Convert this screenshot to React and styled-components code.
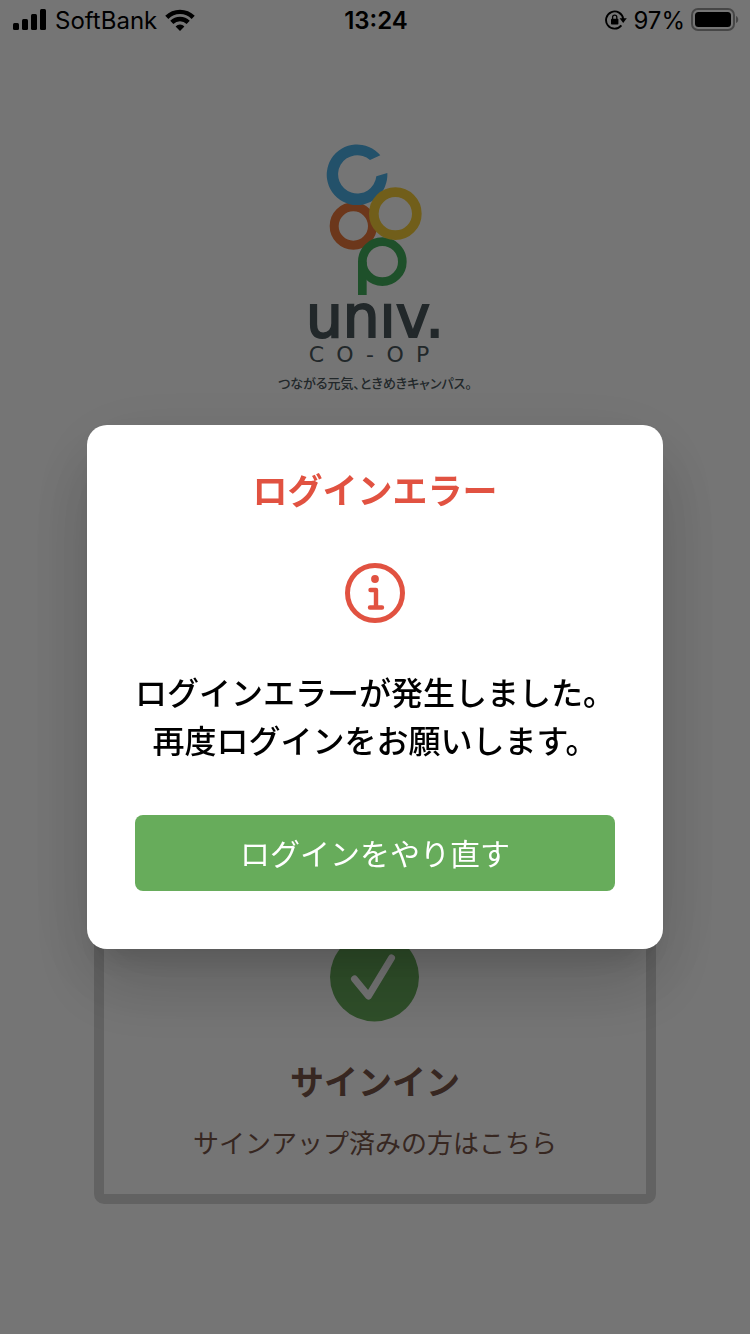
import React from "react";
import styled, { createGlobalStyle } from "styled-components";

const GlobalStyle = createGlobalStyle`
  *, *::before, *::after {
    box-sizing: border-box;
  }
  body {
    margin: 0;
    background: #fff;
    color: #000;
    font-family: Inter, "Noto Sans CJK JP", sans-serif;
  }
`;

function SignalIcon() {
  return (
    <svg width="34" height="22" viewBox="0 0 34 22" aria-hidden="true">
      <rect x="0" y="14" width="6" height="7" rx="1.5" />
      <rect x="9" y="10" width="6" height="11" rx="1.5" />
      <rect x="18" y="5" width="6" height="16" rx="1.5" />
      <rect x="27" y="0" width="6" height="21" rx="1.5" />
    </svg>
  );
}

function WifiIcon() {
  return (
    <svg width="30" height="22" viewBox="0 0 30 22" aria-hidden="true">
      <g fill="none" stroke="#000" strokeWidth="4.4">
        <path d="M1.8 8.4a18.6 18.6 0 0 1 26.4 0" />
        <path d="M6.8 13.4a11.6 11.6 0 0 1 16.4 0" />
      </g>
      <path d="M15 22l-4.4-4.6a6.3 6.3 0 0 1 8.8 0z" />
    </svg>
  );
}

function RotationLockIcon() {
  return (
    <svg width="22" height="20" viewBox="0 0 22 20" aria-hidden="true">
      <path
        d="M16.4 15.4A8.6 8.6 0 1 1 18.2 9"
        fill="none"
        stroke="#000"
        strokeWidth="1.9"
      />
      <path d="M14.6 8.2h7.2l-3.6 4.8z" />
      <rect x="6" y="8.8" width="7.4" height="5.8" rx="0.8" />
      <path
        d="M7.6 9V7.2a2.1 2.1 0 0 1 4.2 0V9"
        fill="none"
        stroke="#000"
        strokeWidth="1.3"
      />
    </svg>
  );
}

function BatteryIcon() {
  return (
    <svg width="48" height="24" viewBox="0 0 48 24" aria-hidden="true">
      <rect
        x="1"
        y="1"
        width="42"
        height="21"
        rx="6"
        fill="none"
        stroke="#000"
        strokeOpacity="0.4"
        strokeWidth="2"
      />
      <rect x="4" y="4" width="36" height="15" rx="3.5" />
      <path d="M45 8c3 1 3 6 0 7z" fillOpacity="0.4" />
    </svg>
  );
}

function CoopMark() {
  return (
    <svg width="98" height="152" viewBox="198 39 294 456" aria-hidden="true">
      <g fill="none">
        <circle cx="280" cy="288" r="57.5" stroke="#eb783b" strokeWidth="27" />
        <circle cx="367" cy="395" r="60" stroke="#43ae5d" strokeWidth="26" />
        <path d="M307 395v100" stroke="#43ae5d" strokeWidth="26" />
      </g>
      <path
        d="M361 76A91 91 0 1 0 382 129L349 139A57.5 57.5 0 1 1 330 90Z"
        fill="#4eb0e6"
      />
      <circle
        cx="406"
        cy="251"
        r="64.5"
        fill="none"
        stroke="#f6ce39"
        strokeWidth="29"
      />
    </svg>
  );
}

function CheckIcon() {
  return (
    <svg width="90" height="90" viewBox="0 0 90 90" aria-hidden="true">
      <circle cx="44.5" cy="45" r="44.5" fill="#67ac5b" />
      <path
        d="M24.5 47L38.5 64L61.5 26"
        fill="none"
        stroke="#fff"
        strokeWidth="7"
        strokeLinecap="round"
        strokeLinejoin="round"
      />
    </svg>
  );
}

function InfoIcon() {
  return (
    <svg width="60" height="60" viewBox="0 0 60 60" aria-hidden="true">
      <g
        fill="none"
        stroke="#e15241"
        strokeLinecap="round"
        strokeLinejoin="round"
      >
        <circle cx="30" cy="30" r="27.5" strokeWidth="5" />
        <path d="M25.5 27H31V44M25 44.5H37" strokeWidth="4.4" />
      </g>
      <circle cx="30" cy="16" r="3.9" fill="#e15241" />
    </svg>
  );
}

export default function App() {
  return (
    <>
      <GlobalStyle />
      <Page>
        <StatusBar>
          <StatusGroup>
            <SignalIcon />
            <StatusText>SoftBank</StatusText>
            <WifiIcon />
          </StatusGroup>
          <Clock>13:24</Clock>
          <StatusGroup $end>
            <RotationLockIcon />
            <StatusText>97%</StatusText>
            <BatteryIcon />
          </StatusGroup>
        </StatusBar>
        <Brand>
          <CoopMark />
          <Wordmark>unıv.</Wordmark>
          <SubMark>CO-OP</SubMark>
          <Tagline>つながる元気、ときめきキャンパス。</Tagline>
        </Brand>
        <SignInCard href="#signin">
          <CheckIcon />
          <CardTitle>サインイン</CardTitle>
          <CardText>サインアップ済みの方はこちら</CardText>
        </SignInCard>
      </Page>
      <Overlay>
        <Dialog role="alertdialog" aria-labelledby="title" aria-describedby="message">
          <DialogTitle id="title">ログインエラー</DialogTitle>
          <InfoIcon />
          <Message id="message">
            ログインエラーが発生しました。
            <br />
            再度ログインをお願いします。
          </Message>
          <RetryButton type="button">ログインをやり直す</RetryButton>
        </Dialog>
      </Overlay>
    </>
  );
}

const Page = styled.div`
  display: flex;
  flex-direction: column;
  align-items: center;
  min-height: 100vh;
  padding-bottom: 130px;
`;

const StatusBar = styled.header`
  display: grid;
  grid-template-columns: 1fr auto 1fr;
  align-items: center;
  width: 100%;
  height: 40px;
  padding: 0 11px 0 13px;
  font-size: 24px;
  line-height: 28px;
`;

const StatusGroup = styled.div`
  display: flex;
  align-items: center;
  justify-content: ${({ $end }) => ($end ? "flex-end" : "flex-start")};
  gap: ${({ $end }) => ($end ? "6px" : "8px")};
`;

const StatusText = styled.span`
  padding-top: 2px;
`;

const Clock = styled.time`
  padding-top: 2px;
  font-size: 24px;
  font-weight: 600;
`;

const Brand = styled.div`
  display: flex;
  flex-direction: column;
  align-items: center;
  padding-top: 103px;
  color: #4a575d;
`;

const Wordmark = styled.div`
  font-family: "DejaVu Sans", sans-serif;
  font-size: 58px;
  line-height: 44px;
  -webkit-text-stroke: 2px #4a575d;
`;

const SubMark = styled.div`
  margin-top: 4px;
  font-family: "DejaVu Sans", sans-serif;
  font-size: 22px;
  line-height: 24px;
  letter-spacing: 12px;
`;

const Tagline = styled.p`
  margin: 6px 0 0;
  font-family: "Noto Sans CJK JP", sans-serif;
  font-size: 13px;
  font-weight: 500;
  line-height: 20px;
  font-feature-settings: "palt";
`;

const SignInCard = styled.a`
  display: flex;
  flex-direction: column;
  align-items: center;
  width: 75%;
  margin-top: auto;
  padding: 32px 16px 30px;
  border: 10px solid #d5d5d5;
  border-radius: 10px;
  color: #795548;
  text-decoration: none;
`;

const CardTitle = styled.h2`
  margin: 36px 0 0;
  font-size: 34px;
  font-weight: 700;
  line-height: 50px;
`;

const CardText = styled.p`
  margin: 16px 0 0;
  font-size: 26px;
  font-weight: 400;
  line-height: 40px;
`;

const Overlay = styled.div`
  position: fixed;
  inset: 0;
  display: flex;
  align-items: center;
  justify-content: center;
  padding: 40px 48px 0;
  background: rgba(0, 0, 0, 0.54);
`;

const Dialog = styled.section`
  display: flex;
  flex-direction: column;
  align-items: center;
  width: 100%;
  max-width: 576px;
  padding: 40px 48px 58px;
  border-radius: 20px;
  background: #fff;
  box-shadow:
    0 22px 30px -14px rgba(0, 0, 0, 0.14),
    0 40px 70px 4px rgba(0, 0, 0, 0.12),
    0 18px 86px 6px rgba(0, 0, 0, 0.08);
`;

const DialogTitle = styled.h1`
  margin: 0 0 46px;
  color: #e15241;
  font-size: 35px;
  font-weight: 700;
  line-height: 52px;
`;

const Message = styled.p`
  margin: 47px 0 49px;
  font-size: 32px;
  font-weight: 500;
  line-height: 48px;
  text-align: center;
  white-space: nowrap;
`;

const RetryButton = styled.button`
  width: 100%;
  height: 76px;
  padding: 0 0 2px;
  border: 0;
  border-radius: 8px;
  background: #67ac5b;
  color: #fff;
  font-family: inherit;
  font-size: 30px;
  font-weight: 400;
  cursor: pointer;
`;
